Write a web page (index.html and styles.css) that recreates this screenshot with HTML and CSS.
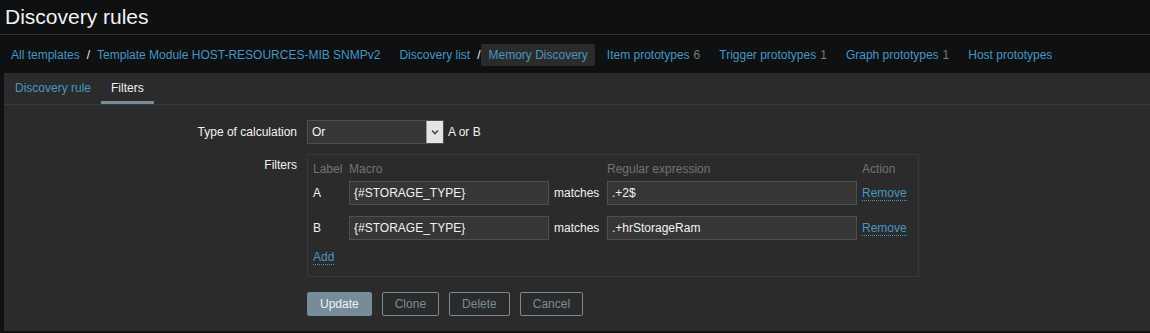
FILE: index.html
```html
<!DOCTYPE html>
<html lang="en">
<head>
<meta charset="utf-8">
<title>Discovery rules</title>
<link rel="stylesheet" href="styles.css">
</head>
<body>
<header class="page-header">
  <h1 class="page-title">Discovery rules</h1>
</header>
<nav class="crumbs">
  <ul class="crumb-list">
    <li class="crumb-item">
      <a class="link" href="#">All templates</a><span class="sep">/</span><a class="link" href="#">Template Module HOST-RESOURCES-MIB SNMPv2</a>
    </li>
    <li class="crumb-item">
      <a class="link" href="#">Discovery list</a><span class="sep">/</span><span class="selected"><a class="link" href="#">Memory Discovery</a></span>
    </li>
    <li class="crumb-item"><a class="link" href="#">Item prototypes</a><span class="count">6</span></li>
    <li class="crumb-item"><a class="link" href="#">Trigger prototypes</a><span class="count">1</span></li>
    <li class="crumb-item"><a class="link" href="#">Graph prototypes</a><span class="count">1</span></li>
    <li class="crumb-item"><a class="link" href="#">Host prototypes</a></li>
  </ul>
</nav>
<main class="content">
  <ul class="tabs">
    <li class="tab"><a class="tab-link" href="#">Discovery rule</a></li>
    <li class="tab tab-active"><a class="tab-link" href="#">Filters</a></li>
  </ul>
  <form class="form">
    <div class="form-label form-label-mid">Type of calculation</div>
    <div class="form-field form-field-inline">
      <div class="select">
        <span class="select-value">Or</span>
        <span class="select-btn">
          <svg width="8" height="6" viewBox="0 0 8 6"><polyline points="1,1.5 4,4.5 7,1.5" fill="none" stroke="#4a4a4a" stroke-width="1.6"/></svg>
        </span>
      </div>
      <span class="calc-text">A or B</span>
    </div>

    <div class="form-label form-label-top">Filters</div>
    <div class="form-field">
      <div class="filter-box">
        <div class="fh">Label</div>
        <div class="fh">Macro</div>
        <div class="fh"></div>
        <div class="fh">Regular expression</div>
        <div class="fh">Action</div>

        <div class="fc">A</div>
        <div class="fc"><span class="input input-macro">{#STORAGE_TYPE}</span></div>
        <div class="fc">matches</div>
        <div class="fc"><span class="input input-regex">.+2$</span></div>
        <div class="fc"><a class="link dotted" href="#">Remove</a></div>

        <div class="fc">B</div>
        <div class="fc"><span class="input input-macro">{#STORAGE_TYPE}</span></div>
        <div class="fc">matches</div>
        <div class="fc"><span class="input input-regex">.+hrStorageRam</span></div>
        <div class="fc"><a class="link dotted" href="#">Remove</a></div>

        <div class="fadd"><a class="link dotted" href="#">Add</a></div>
      </div>
    </div>

    <div class="form-label"></div>
    <div class="form-field buttons">
      <button type="button" class="btn btn-main">Update</button>
      <button type="button" class="btn btn-alt">Clone</button>
      <button type="button" class="btn btn-alt">Delete</button>
      <button type="button" class="btn btn-alt">Cancel</button>
    </div>
  </form>
</main>
</body>
</html>
```

FILE: styles.css
```css
html, body {
  margin: 0;
  padding: 0;
  background: #0e1012;
}
body {
  font-family: "Liberation Sans", Arial, sans-serif;
  font-size: 12px;
  line-height: 14px;
  color: #f2f2f2;
}
a { text-decoration: none; }
.link { color: #4796c4; }
.dotted { border-bottom: 1px dotted #4796c4; }

.page-header {
  padding: 5px 5px;
  border-bottom: 1px solid #303030;
}
.page-title {
  margin: 0;
  font-size: 21px;
  line-height: 24px;
  font-weight: normal;
  color: #f2f2f2;
}

.crumbs {
  padding: 9px 0 7px 11px;
}
.crumb-list {
  list-style: none;
  margin: 0;
  padding: 0;
  display: flex;
  align-items: center;
  height: 22px;
}
.crumb-item {
  display: flex;
  align-items: center;
  margin-right: 19px;
  white-space: nowrap;
}
.sep { margin: 0 7px; color: #f2f2f2; }
.selected {
  background: #2b2b2b;
  padding: 4px 7px;
  margin-left: -6px;
  margin-right: -7px;
  border-radius: 2px;
}
.count {
  margin-left: 4px;
  color: #7a7a7a;
}

.content {
  margin-left: 4px;
  background: #2b2b2b;
  padding-bottom: 15px;
}
.tabs {
  list-style: none;
  margin: 0;
  padding: 0 0 0 1px;
  display: flex;
  border-bottom: 1px solid #383838;
}
.tab-link {
  display: block;
  padding: 8px 10px 6px;
  border-bottom: 3px solid transparent;
  color: #4796c4;
}
.tab-active .tab-link {
  color: #f2f2f2;
  border-bottom-color: #768d99;
}

.form {
  display: grid;
  grid-template-columns: 293px 1fr;
  column-gap: 10px;
  row-gap: 10px;
  padding-top: 15px;
}
.form-label { text-align: right; }
.form-label-mid { align-self: center; }
.form-label-top { padding-top: 4px; }
.form-field-inline {
  display: flex;
  align-items: center;
}

.select {
  box-sizing: border-box;
  width: 137px;
  height: 24px;
  display: flex;
  align-items: stretch;
  background: #363636;
  border: 1px solid #4f4f4f;
}
.select-value {
  flex: 1;
  padding-left: 4px;
  line-height: 22px;
}
.select-btn {
  width: 16px;
  display: flex;
  align-items: center;
  justify-content: center;
  background: #e4e4e4;
  border-left: 1px solid #9a9a9a;
}
.calc-text { margin-left: 4px; }

.filter-box {
  box-sizing: border-box;
  width: 612px;
  border: 1px solid #393939;
  display: grid;
  grid-template-columns: 31px 200px 48px 250px 1fr;
  column-gap: 5px;
  padding: 0 5px 12px;
}
.fh {
  color: #737373;
  padding: 7px 0 4px;
  line-height: 15px;
}
.fc {
  display: flex;
  align-items: center;
  height: 24px;
  margin-bottom: 11px;
}
.fc:nth-last-child(-n+6) { margin-bottom: 10px; }
.fadd {
  grid-column: 1 / -1;
  line-height: 14px;
}
.input {
  box-sizing: border-box;
  display: block;
  height: 24px;
  line-height: 22px;
  padding: 0 4px;
  background: #363636;
  border: 1px solid #4f4f4f;
  color: #f2f2f2;
}
.input-macro { width: 200px; }
.input-regex { width: 250px; }

.buttons {
  display: flex;
  gap: 10px;
  margin-top: 5px;
}
.btn {
  box-sizing: border-box;
  height: 24px;
  padding: 0 12px;
  font-family: "Liberation Sans", Arial, sans-serif;
  font-size: 12px;
  line-height: 22px;
  border: 1px solid #768d99;
  border-radius: 2px;
  cursor: pointer;
}
.btn-main {
  background: #768d99;
  color: #f2f2f2;
}
.btn-alt {
  background: transparent;
  color: #768d99;
}
```
